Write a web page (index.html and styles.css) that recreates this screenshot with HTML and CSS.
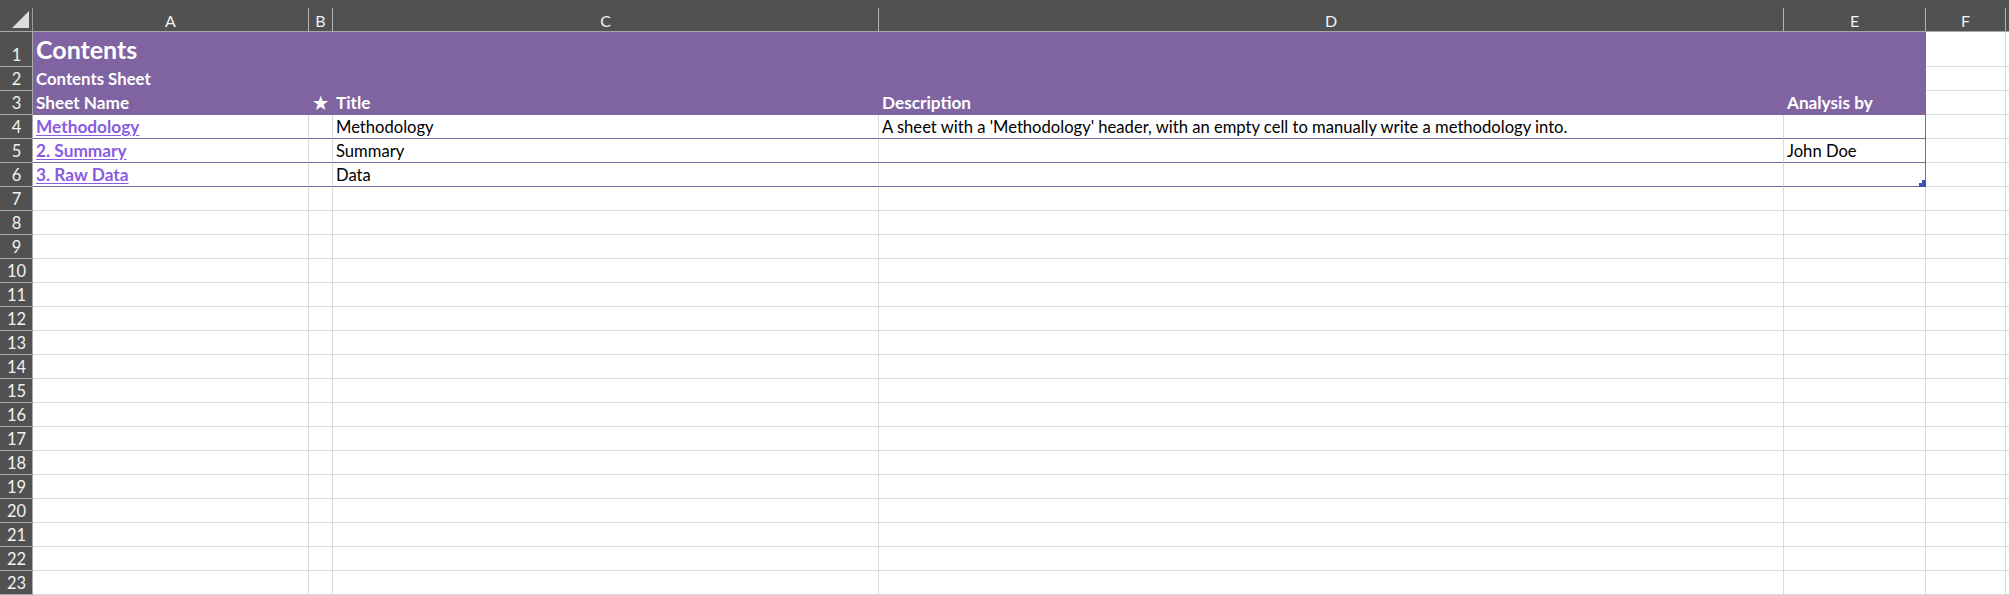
FILE: index.html
```html
<!DOCTYPE html>
<html>
<head>
<meta charset="utf-8">
<title>Contents</title>
<link rel="stylesheet" href="styles.css">
</head>
<body>
<div class="sheet">
  <div class="corner"><span class="corner-in"><svg width="17" height="17" viewBox="0 0 17 17"><polygon points="17,0 17,17 0,17" fill="#dcdcdc"/></svg></span></div>
  <div class="colhead"><span>A</span></div>
  <div class="colhead"><span>B</span></div>
  <div class="colhead"><span>C</span></div>
  <div class="colhead"><span>D</span></div>
  <div class="colhead"><span>E</span></div>
  <div class="colhead"><span>F</span></div>
  <div class="colhead"><span></span></div>

  <div class="rh">1</div>
  <div class="c band title">Contents</div>
  <div class="c band"></div><div class="c band"></div><div class="c band"></div><div class="c band end"></div>
  <div class="c"></div><div class="c"></div>

  <div class="rh">2</div>
  <div class="c band sub">Contents Sheet</div>
  <div class="c band"></div><div class="c band"></div><div class="c band"></div><div class="c band end"></div>
  <div class="c"></div><div class="c"></div>

  <div class="rh">3</div>
  <div class="c band hd">Sheet Name</div>
  <div class="c band hd star">★</div>
  <div class="c band hd">Title</div>
  <div class="c band hd">Description</div>
  <div class="c band hd end">Analysis by</div>
  <div class="c"></div><div class="c"></div>

  <div class="rh">4</div>
  <div class="c tb"><a class="link" href="#">Methodology</a></div>
  <div class="c tb"></div>
  <div class="c tb">Methodology</div>
  <div class="c tb">A sheet with a 'Methodology' header, with an empty cell to manually write a methodology into.</div>
  <div class="c tb end"></div>
  <div class="c"></div><div class="c"></div>

  <div class="rh">5</div>
  <div class="c tb"><a class="link" href="#">2. Summary</a></div>
  <div class="c tb"></div>
  <div class="c tb">Summary</div>
  <div class="c tb"></div>
  <div class="c tb end">John Doe</div>
  <div class="c"></div><div class="c"></div>

  <div class="rh">6</div>
  <div class="c tb"><a class="link" href="#">3. Raw Data</a></div>
  <div class="c tb"></div>
  <div class="c tb">Data</div>
  <div class="c tb"></div>
  <div class="c tb end handle-cell"><span class="handle"><svg width="7" height="7" viewBox="0 0 7 7"><rect x="0" y="3" width="7" height="4" fill="#3d4fae"/><rect x="3" y="0" width="4" height="7" fill="#3d4fae"/></svg></span></div>
  <div class="c"></div><div class="c"></div>

  <div class="rh">7</div><div class="c"></div><div class="c"></div><div class="c"></div><div class="c"></div><div class="c"></div><div class="c"></div><div class="c"></div>
  <div class="rh">8</div><div class="c"></div><div class="c"></div><div class="c"></div><div class="c"></div><div class="c"></div><div class="c"></div><div class="c"></div>
  <div class="rh">9</div><div class="c"></div><div class="c"></div><div class="c"></div><div class="c"></div><div class="c"></div><div class="c"></div><div class="c"></div>
  <div class="rh">10</div><div class="c"></div><div class="c"></div><div class="c"></div><div class="c"></div><div class="c"></div><div class="c"></div><div class="c"></div>
  <div class="rh">11</div><div class="c"></div><div class="c"></div><div class="c"></div><div class="c"></div><div class="c"></div><div class="c"></div><div class="c"></div>
  <div class="rh">12</div><div class="c"></div><div class="c"></div><div class="c"></div><div class="c"></div><div class="c"></div><div class="c"></div><div class="c"></div>
  <div class="rh">13</div><div class="c"></div><div class="c"></div><div class="c"></div><div class="c"></div><div class="c"></div><div class="c"></div><div class="c"></div>
  <div class="rh">14</div><div class="c"></div><div class="c"></div><div class="c"></div><div class="c"></div><div class="c"></div><div class="c"></div><div class="c"></div>
  <div class="rh">15</div><div class="c"></div><div class="c"></div><div class="c"></div><div class="c"></div><div class="c"></div><div class="c"></div><div class="c"></div>
  <div class="rh">16</div><div class="c"></div><div class="c"></div><div class="c"></div><div class="c"></div><div class="c"></div><div class="c"></div><div class="c"></div>
  <div class="rh">17</div><div class="c"></div><div class="c"></div><div class="c"></div><div class="c"></div><div class="c"></div><div class="c"></div><div class="c"></div>
  <div class="rh">18</div><div class="c"></div><div class="c"></div><div class="c"></div><div class="c"></div><div class="c"></div><div class="c"></div><div class="c"></div>
  <div class="rh">19</div><div class="c"></div><div class="c"></div><div class="c"></div><div class="c"></div><div class="c"></div><div class="c"></div><div class="c"></div>
  <div class="rh">20</div><div class="c"></div><div class="c"></div><div class="c"></div><div class="c"></div><div class="c"></div><div class="c"></div><div class="c"></div>
  <div class="rh">21</div><div class="c"></div><div class="c"></div><div class="c"></div><div class="c"></div><div class="c"></div><div class="c"></div><div class="c"></div>
  <div class="rh">22</div><div class="c"></div><div class="c"></div><div class="c"></div><div class="c"></div><div class="c"></div><div class="c"></div><div class="c"></div>
  <div class="rh">23</div><div class="c"></div><div class="c"></div><div class="c"></div><div class="c"></div><div class="c"></div><div class="c"></div><div class="c"></div>
</div>
</body>
</html>
```
FILE: styles.css
```css
* { box-sizing: border-box; }
html, body { margin: 0; padding: 0; background: #ffffff; overflow: hidden; }
body { font-family: Lato, "Liberation Sans", sans-serif; }

.sheet {
  display: grid;
  grid-template-columns: 33px 276px 24px 546px 905px 142px 80px 1fr;
  grid-template-rows: 32px 35px repeat(22, 24px);
  width: 2009px;
  height: 595px;
  overflow: hidden;
}

.corner, .colhead {
  background: #515151;
  border-bottom: 1px solid #a8a8a8;
  padding-top: 8px;
  display: flex;
}
.corner-in {
  flex: 1;
  border-right: 1px solid #9a9a9a;
  display: flex;
  align-items: flex-end;
  justify-content: flex-end;
  padding: 0 3px 3px 0;
}
.corner-in svg { display: block; }
.colhead span {
  flex: 1;
  border-right: 1px solid #b5b5b5;
  color: #f2f2f2;
  font-size: 16px;
  display: flex;
  align-items: center;
  justify-content: center;
  padding-top: 2px;
}

.rh {
  background: #515151;
  color: #f2f2f2;
  font-size: 16.5px;
  border-bottom: 1px solid #a8a8a8;
  border-right: 1px solid #a8a8a8;
  display: flex;
  align-items: flex-end;
  justify-content: center;
  line-height: 20px;
  padding-bottom: 1px;
  padding-left: 1px;
}

.c {
  border-right: 1px solid #dadada;
  border-bottom: 1px solid #dadada;
  font-size: 16.6px;
  color: #000;
  line-height: 20px;
  padding: 0 3px 1px 3px;
  display: flex;
  align-items: flex-end;
  white-space: nowrap;
  min-width: 0;
}

.band {
  background: #8064a2;
  border-right-color: #8064a2;
  border-bottom-color: #8064a2;
  color: #ffffff;
}
.title { font-size: 25px; font-weight: 700; line-height: 30px; padding-bottom: 2px; }
.sub { font-size: 16.8px; font-weight: 700; }
.hd { font-size: 17.2px; font-weight: 700; }
.star { justify-content: center; padding: 0 0 1px 0; font-size: 17px; }

.tb { border-bottom-color: #8064a2; }
.end { border-right-color: #8064a2; }

.link {
  color: #8a5ce2;
  font-weight: 700;
  font-size: 17.3px;
  text-decoration: underline;
  text-underline-offset: 2px;
}

.handle-cell { position: relative; }
.handle {
  position: absolute;
  right: -1px;
  bottom: -1px;
  width: 7px;
  height: 7px;
}
.handle svg { display: block; }
```
